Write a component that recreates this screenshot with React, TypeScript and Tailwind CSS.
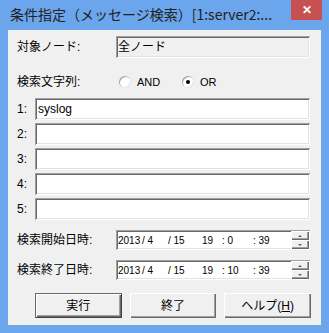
import React from 'react';

const sunken =
  'shadow-[inset_1px_1px_0_#a0a0a0,inset_-1px_-1px_0_#ffffff,inset_2px_2px_0_#696969,inset_-2px_-2px_0_#e3e3e3]';
const raised =
  'shadow-[inset_1px_1px_0_#ffffff,inset_-1px_-1px_0_#696969,inset_-2px_-2px_0_#a0a0a0]';

const Radio: React.FC<{ checked?: boolean; label: string }> = ({ checked, label }) => (
  <div className="flex items-center">
    <div className="w-[12px] h-[12px] rounded-full bg-white flex items-center justify-center shadow-[inset_1px_1px_0_#a0a0a0,inset_-1px_-1px_0_#e3e3e3]">
      {checked && <div className="w-[4px] h-[4px] rounded-full bg-black" />}
    </div>
    <span className="ml-[6px] text-[11px]">{label}</span>
  </div>
);

const Spinner: React.FC = () => (
  <div className="flex flex-col w-[18px] h-[18px] mr-[1px]">
    <div className={`flex-1 bg-[#f0f0f0] flex items-center justify-center ${raised}`}>
      <div className="w-0 h-0 border-l-[2px] border-r-[2px] border-b-[2px] border-l-transparent border-r-transparent border-b-[#606060]" />
    </div>
    <div className={`flex-1 bg-[#f0f0f0] flex items-center justify-center ${raised}`}>
      <div className="w-0 h-0 border-l-[2px] border-r-[2px] border-t-[2px] border-l-transparent border-r-transparent border-t-[#606060]" />
    </div>
  </div>
);

const DateField: React.FC<{ minute: string }> = ({ minute }) => (
  <div className={`w-[194px] h-[20px] bg-white flex items-center pl-[2px] ${sunken}`}>
    <div className="flex-1 flex items-center text-[10px] whitespace-pre">
      <span className="w-[24px] shrink-0">2013</span>
      <span className="w-[26px] shrink-0">/ 4</span>
      <span className="w-[34px] shrink-0">/ 15</span>
      <span className="w-[20px] shrink-0">19</span>
      <span className="w-[31px] shrink-0">: {minute}</span>
      <span>: 39</span>
    </div>
    <Spinner />
  </div>
);

const Button: React.FC<{ primary?: boolean; children: React.ReactNode }> = ({ primary, children }) => (
  <div
    className={`w-[88px] h-[25px] flex items-center justify-center text-[12px] bg-[#f0f0f0] ${
      primary
        ? 'shadow-[inset_1px_1px_0_#696969,inset_-1px_-1px_0_#404040,inset_2px_2px_0_#ffffff,inset_-2px_-2px_0_#696969,inset_-3px_-3px_0_#a0a0a0]'
        : raised
    }`}
  >
    {children}
  </div>
);

export default function App() {
  return (
    <div className="w-[329px] h-[333px] bg-[#6ba5eb] flex flex-col font-['Liberation_Sans','Noto_Sans_CJK_JP',sans-serif] text-black">
      {/* タイトルバー */}
      <div className="h-[30px] flex items-start">
        <div className="flex-1 pl-[10px] pt-[5px] text-[14px] leading-[18px] text-[#222] whitespace-nowrap font-['Noto_Sans_CJK_JP',sans-serif]">
          条件指定（メッセージ検索）[1:server2:...
        </div>
        <div className="w-[31px] h-[20px] bg-[#c75050] flex items-center justify-center text-white text-[12px] font-bold mr-[7px] shrink-0">
          ✕
        </div>
      </div>

      {/* クライアント領域 */}
      <div className="flex-1 mx-[8px] mb-[8px] bg-[#f0f0f0] pl-[9px] pr-[10px] pt-[6px] text-[12px]">
        <div className="flex items-center h-[22px]">
          <div className="w-[99px]">対象ノード:</div>
          <div className={`w-[194px] h-[22px] flex items-center pl-[2px] bg-[#f0f0f0] ${sunken}`}>全ノード</div>
        </div>

        <div className="flex items-center h-[16px] mt-[16px]">
          <div className="w-[102px]">検索文字列:</div>
          <div className="w-[63px]">
            <Radio label="AND" />
          </div>
          <Radio checked label="OR" />
        </div>

        <div className="flex flex-col gap-[3px] mt-[8px]">
          {['syslog', '', '', '', ''].map((v, i) => (
            <div key={i} className="flex items-center h-[22px]">
              <div className="w-[18px]">{i + 1}:</div>
              <div className={`w-[275px] h-[22px] bg-white flex items-center pl-[3px] ${sunken}`}>{v}</div>
            </div>
          ))}
        </div>

        <div className="flex items-center h-[20px] mt-[10px]">
          <div className="w-[99px]">検索開始日時:</div>
          <DateField minute="0" />
        </div>
        <div className="flex items-center h-[20px] mt-[10px]">
          <div className="w-[99px]">検索終了日時:</div>
          <DateField minute="10" />
        </div>

        <div className="flex gap-[8px] mt-[13px] pl-[18px]">
          <Button primary>実行</Button>
          <Button>終了</Button>
          <Button>
            ヘルプ(<span className="underline">H</span>)
          </Button>
        </div>
      </div>
    </div>
  );
}
